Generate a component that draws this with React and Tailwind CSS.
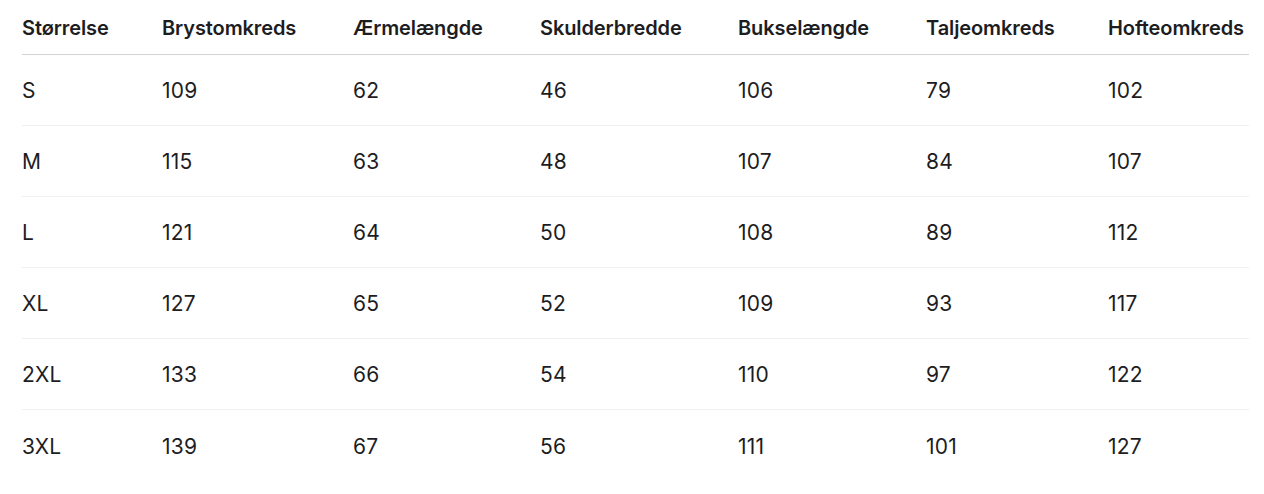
import React from 'react';

const headers = ['Størrelse', 'Brystomkreds', 'Ærmelængde', 'Skulderbredde', 'Bukselængde', 'Taljeomkreds', 'Hofteomkreds'];

const rows = [
  ['S', '109', '62', '46', '106', '79', '102'],
  ['M', '115', '63', '48', '107', '84', '107'],
  ['L', '121', '64', '50', '108', '89', '112'],
  ['XL', '127', '65', '52', '109', '93', '117'],
  ['2XL', '133', '66', '54', '110', '97', '122'],
  ['3XL', '139', '67', '56', '111', '101', '127'],
];

const cols = 'grid grid-cols-[140px_191px_187px_198px_188px_182px_141px]';

const App = () => {
  return (
    <div className="min-h-screen bg-white text-[#1d1d1f] font-['Inter','Liberation_Sans',sans-serif]">
      <div className="ml-[22px] w-[1227px]">
        <div className={`${cols} h-[55px] items-center border-b border-[#d2d2d7] text-[20px] font-semibold tracking-[-0.1px]`}>
          {headers.map((h) => (
            <div key={h} className="mt-[2px] whitespace-nowrap">{h}</div>
          ))}
        </div>
        {rows.map((r, i) => (
          <div
            key={r[0]}
            className={`${cols} h-[71px] items-center text-[21px] tracking-[0.2px] ${i < rows.length - 1 ? 'border-b border-[#f0f0f2]' : ''}`}
          >
            {r.map((c, j) => (
              <div key={j} className="mt-[2px]">{c}</div>
            ))}
          </div>
        ))}
      </div>
    </div>
  );
};

export default App;
